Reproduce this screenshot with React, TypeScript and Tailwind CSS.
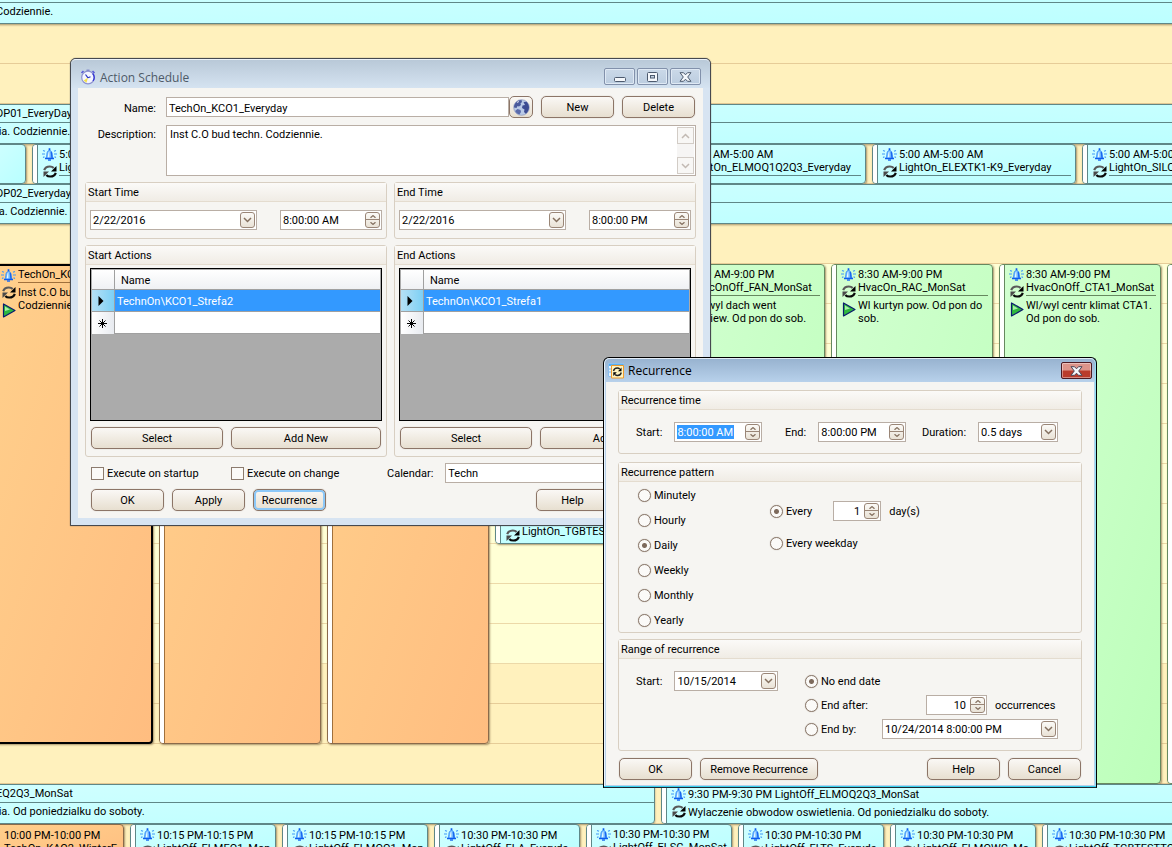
import React, { useId } from "react";
import type { ReactNode } from "react";

/* ---------- Icons ---------- */

function BellIcon() {
  return (
    <svg width="15" height="13" viewBox="0 0 15 13" fill="none" aria-hidden="true">
      <path d="M3.500 10.500C5 9.500 4.600 7 5 5c.4-1.700 1.300-2.600 2.500-2.600S9.600 3.300 10 5c.4 2 0 4.500 1.500 5.500z" fill="#6fb9ff" stroke="#2f86f6" strokeWidth=".8" />
      <path d="M5.700 9.500C6.200 8 5.900 4 7.400 3.200V9.500z" fill="#e6f8ff" />
      <path d="M9.200 4c.8 2 .2 4.500 1 6" stroke="#1a66f0" strokeWidth="1.300" />
      <path d="M3 10.500h9" stroke="#0d5cf0" strokeWidth="1.600" />
      <path d="M7.500 .300v2" stroke="#0d5cf0" strokeWidth="1.700" />
      <path d="M6 12h3" stroke="#1f6cf0" strokeWidth="1.400" />
      <path d="M1 2.500l2 .8M0 6h3M1 9.500l1.500-.8M14 2.500l-2 .8M15 6h-3M14 9.500l-1.500-.8" stroke="#3f97f8" strokeWidth="1.200" />
    </svg>
  );
}

function SyncIcon() {
  return (
    <svg width="14" height="13" viewBox="0 0 14 13" fill="none" aria-hidden="true">
      <path d="M1.200 5.200C2 2.800 4.200 1.500 6.800 1.500c1.600 0 3 .6 3.900 1.600" stroke="#5a5a5a" strokeWidth="2.200" />
      <path d="M13.500 1v5.500H8z" fill="#000" />
      <path d="M12.800 7.800c-.8 2.400-3 3.700-5.600 3.700-1.600 0-3-.6-3.900-1.600" stroke="#0a0a0a" strokeWidth="2.200" />
      <path d="M.5 12V6.500H6z" fill="#4a4a4a" />
    </svg>
  );
}

function PlayIcon() {
  return (
    <svg width="14" height="15" viewBox="0 0 14 15" aria-hidden="true">
      <path d="M1.500 1v13l11.500-6.500z" fill="#2fb83f" stroke="#0b1a6e" strokeWidth="1.200" strokeLinejoin="round" />
      <path d="M3 3.500v4.500l5-1.500z" fill="#a6f0a6" />
    </svg>
  );
}

function StopwatchIcon() {
  return (
    <svg width="16" height="16" viewBox="0 0 16 16" fill="none" aria-hidden="true">
      <path d="M1.500 4l2-2M12.500 2l2 2" stroke="#5a5ad8" strokeWidth="1.600" />
      <path d="M6.500 1.300h3" stroke="#7a80c8" strokeWidth="1.400" />
      <circle cx="8" cy="8.500" r="6.300" fill="#f4f5ff" stroke="#8e93d0" strokeWidth="1.200" />
      <path d="M8 8.500l-1.500 5.200-2.800-2.200z" fill="#f4e04a" />
      <path d="M8 8.800L5.500 5.500M8 8.800l2.500-1" stroke="#2b35c0" strokeWidth="1.200" />
      <path d="M12.700 4.500a6.300 6.300 0 0 1 .3 7.500" stroke="#3434d4" strokeWidth="1.300" />
    </svg>
  );
}

function GlobeIcon() {
  return (
    <svg width="17" height="17" viewBox="0 0 17 17" aria-hidden="true">
      <circle cx="8.500" cy="8.500" r="7.800" fill="#b9c9e6" stroke="#8794bd" strokeWidth=".7" />
      <path d="M3 3.500C4.500 1.800 6.500 1 8.500 1L9 3 7.500 4.500 8 6 6 7.500 4.500 7 3.500 9 1 8.500C1 6.500 1.700 4.800 3 3.500z" fill="#4a5a9c" />
      <path d="M10.500 3l3-.2C15 4.200 16 6.200 16 8.500c0 2.600-1.300 4.800-3.200 6.200L11 13l.5-2.500L9 9l.5-2.500L12 6z" fill="#3c4b92" />
      <path d="M4.500 10l3 1 .5 2-1.500 2.600C4.300 15 3 13.500 2 12z" fill="#5a6bab" />
      <path d="M4 3.500l2-1" stroke="#fff" strokeWidth=".8" />
    </svg>
  );
}

function RecurrenceIcon() {
  return (
    <svg width="17" height="16" viewBox="0 0 17 16" fill="none" aria-hidden="true">
      <path d="M.5.500h15v13H.5z" fill="#e6f3ff" stroke="#8cc0f0" />
      <path d="M1 1h14.500v2H1z" fill="#58aef0" />
      <path d="M1 6h2M1 9h2" stroke="#70b4ee" />
      <path d="M3.500 2.500h12v12.500h-12z" fill="#fff4c0" stroke="#f09a2a" />
      <path d="M5.500 8c.5-2 2-3 3.700-3 1.100 0 2 .4 2.600 1M13.300 9.500c-.5 2-2 3-3.700 3-1.100 0-2-.4-2.600-1" stroke="#222" strokeWidth="1.400" />
      <path d="M13.500 4.500v3.700H10zM5.300 13V9.300h3.500z" fill="#000" />
    </svg>
  );
}

function Chevron({ up = false, muted = false }: { up?: boolean; muted?: boolean }) {
  return (
    <svg width="9" height="6" viewBox="0 0 9 6" fill="none" aria-hidden="true">
      <path d={up ? "M1 5l3.500-3.500L8 5" : "M1 1l3.500 3.500L8 1"} stroke={muted ? "#c2bab3" : "#84705f"} strokeWidth="1.500" />
    </svg>
  );
}

function SmallArrow({ up = false }: { up?: boolean }) {
  return (
    <svg width="6" height="3" viewBox="0 0 6 3" fill="none" aria-hidden="true">
      <path d={up ? "M.5 2.800L3 .600l2.500 2.200" : "M.5.200L3 2.400 5.500.200"} stroke="#84705f" strokeWidth="1.200" />
    </svg>
  );
}

/* ---------- Calendar board ---------- */

type Tone = "cyan" | "green" | "orange";

const tones: Record<Tone, string> = {
  cyan: "border-[#5f8787] bg-linear-to-br from-[#d0ffff] to-[#b8ffff]",
  green: "border-[#66885f] bg-linear-to-br from-[#d2ffd0] to-[#bcffba]",
  orange: "border-[#8a6a4a] bg-linear-to-br from-[#ffd08c] to-[#ffbd80]",
};

const rules: Record<Tone, string> = {
  cyan: "border-[#5f8787]",
  green: "border-[#66885f]",
  orange: "border-[#a0703c]",
};

interface EventProps {
  tone: Tone;
  size: string;
  title?: string[];
  body?: string;
  play?: boolean;
  selected?: boolean;
  low?: boolean;
  plain?: boolean;
}

function EventCard({ tone, size, title = [], body, play, selected, low, plain }: EventProps) {
  return (
    <article
      className={`flex shrink-0 overflow-hidden rounded shadow-[1px_1px_2px_#a8946a] ${tones[tone]} ${size} ${
        selected ? "border-2 border-black" : "border"
      }`}
    >
      <div className={`w-[5px] shrink-0 border-r bg-white ${rules[tone]}`} />
      {title.length > 0 && (
        <>
          <div className="flex w-[21px] shrink-0 flex-col items-center gap-1 pt-[3px] pl-[2px]">
            <BellIcon />
            <SyncIcon />
            {play && <PlayIcon />}
          </div>
          <div className={`min-w-0 flex-1 overflow-hidden pr-1 ${low ? "pt-1" : selected ? "pt-[2px]" : "pt-[3px]"}`}>
            {title.map((line) => (
              <p key={line} className="whitespace-nowrap">
                {line}
              </p>
            ))}
            {!plain && <hr className={`mt-px mb-[3px] ${rules[tone]}`} />}
            {body && <p className="whitespace-pre-line">{body}</p>}
          </div>
        </>
      )}
    </article>
  );
}

function Band({ title, body, size = "" }: { title: string; body: string; size?: string }) {
  return (
    <article
      className={`h-10 shrink-0 border border-[#5f8787] bg-linear-to-br from-[#d0ffff] to-[#bcffff] pt-[2px] pl-[5px] whitespace-nowrap shadow-[0_1px_2px_#a8946a] ${size}`}
    >
      <p className="h-[13px]">{title}</p>
      <hr className="mt-[2px] mb-[2px] border-[#5f8787]" />
      <p>{body}</p>
    </article>
  );
}

const slots = Array.from({ length: 22 }, (_, i) => i);

const lateEvents = [
  { line: "10:15 PM-10:15 PM", name: "LightOff_ELMEQ1_Mon" },
  { line: "10:15 PM-10:15 PM", name: "LightOff_ELMOQ1_Mon" },
  { line: "10:30 PM-10:30 PM", name: "LightOff_ELA_Everyda" },
  { line: "10:30 PM-10:30 PM", name: "LightOff_ELSG_MonSat", high: true },
  { line: "10:30 PM-10:30 PM", name: "LightOff_ELTS_Everyda" },
  { line: "10:30 PM-10:30 PM", name: "LightOff_ELMOWG_Mo" },
  { line: "10:30 PM-10:30 PM", name: "LightOff_TGBTESTTO" },
];

function Board() {
  return (
    <main className="relative -mt-4 -mr-1 -ml-[10px]">
      <div className="absolute inset-0">
        {slots.map((i) => (
          <div
            key={i}
            className={`h-10 border-b ${i >= 7 && i < 17 ? "border-[#ecd9a8] bg-[#ffffd5]" : "border-[#e6cc98] bg-[#fff1bd]"}`}
          />
        ))}
      </div>
      <div className="relative">
        <Band title="" body="Codziennie." />
        <div className="mt-20">
          <Band title="DP01_EveryDay" body="lia. Codziennie." />
        </div>
        <div className="flex h-10 gap-[6px] overflow-hidden">
          <EventCard tone="cyan" size="w-[36px]" />
          <EventCard tone="cyan" size="w-[204px]" title={["5:00 AM-5:00 AM", "LightOn_Everyday"]} />
          <EventCard tone="cyan" size="w-[204px]" />
          <EventCard tone="cyan" size="w-[204px]" />
          <EventCard tone="cyan" size="w-[204px]" title={["5:00 AM-5:00 AM", "LightOn_ELMOQ1Q2Q3_Everyday"]} />
          <EventCard tone="cyan" size="w-[204px]" title={["5:00 AM-5:00 AM", "LightOn_ELEXTK1-K9_Everyday"]} />
          <EventCard tone="cyan" size="w-[204px]" title={["5:00 AM-5:00 AM", "LightOn_SILOS_Everyday"]} />
        </div>
        <Band title="DP02_Everyday" body="ia. Codziennie." />
        <div className="mt-10 flex h-[520px] gap-[6px] overflow-hidden">
          <EventCard
            tone="orange"
            size="h-[480px] w-[163px]"
            title={["TechOn_KCO1_Everyday"]}
            body={"Inst C.O bud techn.\nCodziennie."}
            play
            selected
          />
          <EventCard tone="orange" size="h-[480px] w-[162px]" />
          <EventCard tone="orange" size="h-[480px] w-[162px]" />
          <div className="pt-[244px]">
            <EventCard tone="cyan" size="h-9 w-[162px]" title={["5:30 PM", "LightOn_TGBTEST"]} plain />
          </div>
          <EventCard
            tone="green"
            size="w-[162px]"
            title={["8:30 AM-9:00 PM", "HvacOnOff_FAN_MonSat"]}
            body={"Wl/wyl dach went\nnawiew. Od pon do sob."}
            play
          />
          <EventCard tone="green" size="w-[162px]" title={["8:30 AM-9:00 PM", "HvacOn_RAC_MonSat"]} body="Wl kurtyn pow. Od pon do sob." play />
          <EventCard tone="green" size="w-[162px]" title={["8:30 AM-9:00 PM", "HvacOnOff_CTA1_MonSat"]} body="Wl/wyl centr klimat CTA1. Od pon do sob." play />
          <EventCard tone="green" size="w-[162px]" />
        </div>
        <div className="flex h-10 gap-[6px]">
          <Band size="w-[665px] rounded-br" title="EQ2Q3_MonSat" body="lia. Od poniedzialku do soboty." />
          <EventCard
            tone="cyan"
            size="w-[700px]"
            title={["9:30 PM-9:30 PM LightOff_ELMOQ2Q3_MonSat"]}
            body="Wylaczenie obwodow oswietlenia. Od poniedzialku do soboty."
          />
        </div>
        <div className="flex h-10 gap-[6px] overflow-hidden">
          <article className={`w-[134px] shrink-0 overflow-hidden rounded border pt-1 pl-[13px] whitespace-nowrap shadow-[1px_1px_2px_#a8946a] ${tones.orange}`}>
            <p>10:00 PM-10:00 PM</p>
            <p>TechOn_KAQ2_WinterE</p>
          </article>
          {lateEvents.map((e) => (
            <EventCard key={e.name} tone="cyan" size="w-[146px]" title={[e.line, e.name]} low={!e.high} plain />
          ))}
        </div>
      </div>
    </main>
  );
}

/* ---------- Form controls ---------- */

const frame = "flex h-5 items-center border border-[#b9aea5] bg-white";
const boxButton =
  "flex items-center justify-center rounded-[3px] border border-[#9a8677] bg-linear-to-b from-[#fbfaf7] to-[#e9e2d6]";

function PushButton({ children, size = "w-[73px]", focused }: { children: ReactNode; size?: string; focused?: boolean }) {
  return (
    <button
      type="button"
      className={`h-[22px] shrink-0 rounded-[5px] border border-[#8c7567] bg-linear-to-b from-[#faf8f5] to-[#e7dfd0] text-center shadow-[0_0_1px_#b9aa9c] ${size} ${
        focused ? "inset-ring-2 inset-ring-[#8cc8f8]" : ""
      }`}
    >
      {children}
    </button>
  );
}

function Spinner() {
  return (
    <span className="mr-px flex h-4 w-[15px] shrink-0 flex-col overflow-hidden rounded-[3px] border border-[#9a8677] bg-linear-to-b from-[#fbfaf7] to-[#e9e2d6]">
      <button type="button" aria-label="Increase" className="flex h-[7px] items-center justify-center border-b border-[#9a8677]">
        <SmallArrow up />
      </button>
      <button type="button" aria-label="Decrease" className="flex h-[7px] items-center justify-center">
        <SmallArrow />
      </button>
    </span>
  );
}

interface FieldProps {
  label: string;
  value: string;
  size: string;
  hideLabel?: boolean;
  kind?: "spin" | "drop";
  selected?: boolean;
  right?: boolean;
}

function Field({ label, value, size, hideLabel, kind = "spin", selected, right }: FieldProps) {
  const id = useId();
  return (
    <>
      {!hideLabel && <label htmlFor={id}>{label}</label>}
      <span className={`${frame} ${size}`}>
        <input
          id={id}
          aria-label={hideLabel ? label : undefined}
          defaultValue={value}
          className={`h-[14px] outline-none ${
            selected ? "mr-auto ml-[2px] w-[57px] bg-[#3399ff] text-white" : "min-w-0 flex-1 pl-[2px]"
          } ${right ? "pr-1 text-right" : ""}`}
        />
        {kind === "spin" ? (
          <Spinner />
        ) : (
          <button type="button" aria-label="Open calendar" className={`mr-px h-4 w-[15px] shrink-0 ${boxButton}`}>
            <Chevron />
          </button>
        )}
      </span>
    </>
  );
}

function Dropdown({ label, value, size }: { label: string; value: string; size: string }) {
  const id = useId();
  return (
    <>
      <label htmlFor={id}>{label}</label>
      <span className={`relative ${frame} ${size}`}>
        <select id={id} defaultValue={value} className="h-full w-full appearance-none pl-[2px] outline-none">
          <option>{value}</option>
        </select>
        <span className={`pointer-events-none absolute top-px right-px h-4 w-[15px] ${boxButton}`}>
          <Chevron />
        </span>
      </span>
    </>
  );
}

function Radio({ name, label, checked }: { name: string; label: string; checked?: boolean }) {
  return (
    <label className="flex items-center gap-[3px] whitespace-nowrap">
      <input
        type="radio"
        name={name}
        defaultChecked={checked}
        className="size-[13px] appearance-none rounded-full border border-[#8c7b6e] bg-[#fbfaf8] shadow-[0_0_1px_#a99a8d] checked:bg-[radial-gradient(circle,#7d6a5c_2px,transparent_3px)]"
      />
      {label}
    </label>
  );
}

function Check({ label, size }: { label: string; size: string }) {
  return (
    <label className={`flex items-center gap-[3px] whitespace-nowrap ${size}`}>
      <input type="checkbox" className="size-[13px] appearance-none border border-[#8c7b6e] bg-[#fbfaf8]" />
      {label}
    </label>
  );
}

function Group({ title, children, pad }: { title: string; children: ReactNode; pad: string }) {
  return (
    <section className="min-w-0 flex-1 rounded-[3px] border border-[#d8cfc2]">
      <h2 className="h-[19px] border-b border-[#e4dccf] bg-linear-to-b from-[#fbfaf8] to-[#f0ece5] pl-[2px] leading-[20px]">{title}</h2>
      <div className={pad}>{children}</div>
    </section>
  );
}

function ActionsTable({ item }: { item: string }) {
  return (
    <div className="h-[153px] border border-black bg-[#ababab] p-px">
      <table className="w-full border-separate border-spacing-0 text-left">
        <thead>
          <tr className="h-5 bg-linear-to-b from-white to-[#eef0f3]">
            <th className="w-[23px] border-r border-b border-[#a0a0a0]" />
            <th className="border-b border-[#a0a0a0] pt-px pl-[6px] font-normal">Name</th>
          </tr>
        </thead>
        <tbody>
          <tr className="h-[22px]">
            <td className="border-r border-b border-[#a0a0a0] bg-linear-to-r from-[#b5e0f5] to-[#7cd0f5] pl-[6px]">
              <svg width="6" height="10" viewBox="0 0 6 10" aria-hidden="true">
                <path d="M.5 0v10L5.500 5z" />
              </svg>
            </td>
            <td className="border-b border-[#a0a0a0] bg-[#3399ff] pt-px pl-[2px] text-white">{item}</td>
          </tr>
          <tr className="h-[22px]">
            <td className="border-r border-[#a0a0a0] bg-linear-to-r from-white to-[#e8ebf0] pl-[6px]">
              <svg width="9" height="9" viewBox="0 0 9 9" stroke="#000" aria-hidden="true">
                <path d="M4.500 0v9M0 4.500h9M1.500 1.500l6 6M7.500 1.500l-6 6" />
              </svg>
            </td>
            <td className="border-b border-[#a0a0a0] bg-white" />
          </tr>
        </tbody>
      </table>
    </div>
  );
}

/* ---------- Windows ---------- */

const caption =
  "flex h-[17px] w-[31px] items-center justify-center rounded-[2px] border border-[#8291ab] bg-linear-to-b from-[#cbd9e8] to-[#bccde0] inset-ring inset-ring-[#dfe9f4]";

function CaptionCross({ dark }: { dark?: boolean }) {
  return (
    <svg width="13" height="10" viewBox="0 0 13 10" aria-hidden="true">
      <path
        d="M1 .700h3.500L6.500 2.800 8.500.700H12L8.700 5l3.300 4.300H8.500L6.500 7.200l-2 2.100H1L4.300 5z"
        fill="#f4f7fb"
        stroke={dark ? "#4b4658" : "#4d5a6e"}
        strokeLinejoin="round"
      />
    </svg>
  );
}

function ActionScheduleWindow() {
  return (
    <section className="absolute top-[58px] left-[70px] w-[641px] rounded-t-md border border-[#46494f] bg-[#d7e4f2] px-[7px] pb-[7px] shadow-[0_0_1px_#333]">
      <header className="-mx-[7px] flex h-[29px] items-center rounded-t-[5px] border-t border-white/60 bg-linear-to-b from-[#b9c9d8] to-[#d5e3f1] pt-[7px] pr-[9px] pb-[2px] pl-[9px]">
        <StopwatchIcon />
        <h1 className="flex-1 pt-px pl-1 font-['Open_Sans',sans-serif] text-[12px] text-[#4e5a68]">Action Schedule</h1>
        <div className="flex gap-[2px]">
          <button type="button" aria-label="Minimize" className={caption}>
            <svg width="12" height="10" viewBox="0 0 12 10" aria-hidden="true">
              <rect x=".5" y="5.500" width="11" height="4" rx="1" fill="#f4f7fb" stroke="#4d5a6e" />
            </svg>
          </button>
          <button type="button" aria-label="Maximize" className={caption}>
            <svg width="11" height="10" viewBox="0 0 11 10" aria-hidden="true">
              <rect x=".5" y=".5" width="10" height="9" rx="1" fill="#f4f7fb" stroke="#4d5a6e" />
              <rect x="3.500" y="3.500" width="4" height="2.500" fill="#c5d3e3" stroke="#4d5a6e" />
            </svg>
          </button>
          <button type="button" aria-label="Close" className={caption}>
            <CaptionCross />
          </button>
        </div>
      </header>
      <form className="bg-[#f6f5f2] px-[7px] pt-2 pb-[7px]">
        <div className="flex items-center">
          <label htmlFor="schedule-name" className="w-[71px] pt-[2px] text-right">
            Name:
          </label>
          <input id="schedule-name" defaultValue="TechOn_KCO1_Everyday" className="ml-[10px] h-5 min-w-0 flex-1 border border-[#b9aea5] bg-white pt-[2px] pl-[2px] outline-none" />
          <button type="button" aria-label="Translate" className="flex h-[22px] w-6 items-center justify-center rounded-[5px] border border-[#8c7567] bg-linear-to-b from-[#faf8f5] to-[#e7dfd0]">
            <GlobeIcon />
          </button>
          <div className="ml-2 flex gap-2 pr-px">
            <PushButton>New</PushButton>
            <PushButton>Delete</PushButton>
          </div>
        </div>
        <div className="mt-[7px] flex">
          <label htmlFor="schedule-description" className="w-[71px] pt-[3px] text-right">
            Description:
          </label>
          <div className="ml-[10px] flex h-[51px] flex-1 border border-[#b9aea5] bg-white">
            <textarea id="schedule-description" defaultValue="Inst C.O bud techn. Codziennie." className="flex-1 resize-none pt-[2px] pl-[3px] outline-none" />
            <div className="m-px flex w-[17px] flex-col justify-between bg-[#f6f5f4]">
              <button type="button" aria-label="Scroll up" className="flex h-[17px] items-center justify-center border border-[#d2ccc6] bg-[#f8f7f5]">
                <Chevron up muted />
              </button>
              <button type="button" aria-label="Scroll down" className="flex h-[17px] items-center justify-center border border-[#d2ccc6] bg-[#f8f7f5]">
                <Chevron muted />
              </button>
            </div>
          </div>
        </div>
        <div className="mt-[6px] flex gap-[7px]">
          <Group title="Start Time" pad="flex justify-between px-1 pt-2 pb-2">
            <Field label="Start date" hideLabel value="2/22/2016" kind="drop" size="w-[167px]" />
            <Field label="Start hour" hideLabel value="8:00:00 AM" size="w-[102px]" />
          </Group>
          <Group title="End Time" pad="flex justify-between px-1 pt-2 pb-2">
            <Field label="End date" hideLabel value="2/22/2016" kind="drop" size="w-[167px]" />
            <Field label="End hour" hideLabel value="8:00:00 PM" size="w-[102px]" />
          </Group>
        </div>
        <div className="mt-[6px] flex gap-[7px]">
          {["TechnOn\\KCO1_Strefa2", "TechnOn\\KCO1_Strefa1"].map((item, i) => (
            <Group key={item} title={i ? "End Actions" : "Start Actions"} pad="px-1 pt-[3px] pb-[7px]">
              <ActionsTable item={item} />
              <div className="mt-[6px] flex gap-2 px-px">
                <PushButton size="w-[132px]">Select</PushButton>
                <PushButton size="flex-1">Add New</PushButton>
              </div>
            </Group>
          ))}
        </div>
        <div className="mt-[6px] flex items-center pl-[6px]">
          <Check label="Execute on startup" size="w-[140px]" />
          <Check label="Execute on change" size="w-[156px]" />
          <div className="flex flex-1 items-center gap-3">
            <Dropdown label="Calendar:" value="Techn" size="flex-1" />
          </div>
        </div>
        <div className="mt-[6px] flex gap-2 pl-[6px]">
          <PushButton>OK</PushButton>
          <PushButton>Apply</PushButton>
          <PushButton focused>Recurrence</PushButton>
          <div className="flex flex-1 justify-end pr-[87px]">
            <PushButton>Help</PushButton>
          </div>
        </div>
      </form>
    </section>
  );
}

function RecurrenceWindow() {
  return (
    <section className="absolute top-[357px] left-[603px] w-[494px] rounded-t-md border border-black border-b-[#1b2a33] bg-[#b7d0ea] px-[2px] pb-[2px] shadow-[inset_0_-1px_0_#35d0ee,inset_1px_0_0_#eaf4fc,inset_-1px_0_0_#8fe0f4]">
      <header className="-mx-px flex h-6 items-center rounded-t-[5px] border-t border-white/60 bg-linear-to-b from-[#98b3d0] to-[#b8d1eb] pr-[3px] pl-[3px]">
        <RecurrenceIcon />
        <h1 className="flex-1 pl-[3px] font-['Open_Sans',sans-serif] text-[12px] text-black">Recurrence</h1>
        <button
          type="button"
          aria-label="Close"
          className="flex h-[17px] w-[31px] items-center justify-center rounded-[2px] border border-[#4c1a22] bg-linear-to-b from-[#dc948a] from-45% to-[#b93b2c] to-55% inset-ring inset-ring-white/40"
        >
          <CaptionCross dark />
        </button>
      </header>
      <form className="flex flex-col bg-[#f6f5f2] px-3 pt-2 pb-[5px]">
        <Group title="Recurrence time" pad="flex items-center pt-3 pb-[11px] pl-[17px]">
          <div className="flex w-[149px] items-center gap-3">
            <Field label="Start:" value="8:00:00 AM" size="w-[88px]" selected />
          </div>
          <div className="flex w-[137px] items-center gap-3">
            <Field label="End:" value="8:00:00 PM" size="w-[88px]" />
          </div>
          <div className="flex items-center gap-3">
            <Dropdown label="Duration:" value="0.5 days" size="w-[80px]" />
          </div>
        </Group>
        <div className="mt-2 flex">
          <Group title="Recurrence pattern" pad="flex pt-[7px] pb-[5px] pl-[19px]">
            <div className="flex w-[132px] flex-col gap-3">
              {["Minutely", "Hourly", "Daily", "Weekly", "Monthly", "Yearly"].map((p) => (
                <Radio key={p} name="pattern" label={p} checked={p === "Daily"} />
              ))}
            </div>
            <div className="flex flex-col gap-4 pt-3">
              <div className="flex items-center">
                <Radio name="daily" label="Every" checked />
                <div className="ml-[21px] flex items-center gap-2">
                  <Field label="Day interval" hideLabel value="1" size="w-[48px]" right />
                  <span>day(s)</span>
                </div>
              </div>
              <Radio name="daily" label="Every weekday" />
            </div>
          </Group>
        </div>
        <div className="mt-[6px] flex">
          <Group title="Range of recurrence" pad="flex pt-3 pb-[11px] pl-[17px]">
            <div className="flex w-[169px] items-center gap-3 self-start">
              <Field label="Start:" value="10/15/2014" kind="drop" size="w-[104px]" />
            </div>
            <div className="flex flex-col gap-1">
              <div className="flex h-5 items-center">
                <Radio name="range" label="No end date" checked />
              </div>
              <div className="flex h-5 items-center">
                <div className="w-[121px]">
                  <Radio name="range" label="End after:" />
                </div>
                <div className="flex items-center gap-2">
                  <Field label="Occurrence count" hideLabel value="10" size="w-[61px]" right />
                  <span>occurrences</span>
                </div>
              </div>
              <div className="flex h-5 items-center">
                <div className="w-[77px]">
                  <Radio name="range" label="End by:" />
                </div>
                <Field label="End by date" hideLabel value="10/24/2014 8:00:00 PM" kind="drop" size="w-[176px]" />
              </div>
            </div>
          </Group>
        </div>
        <div className="mt-[7px] flex gap-2 px-px">
          <PushButton>OK</PushButton>
          <PushButton size="w-[118px]">Remove Recurrence</PushButton>
          <div className="flex flex-1 justify-end gap-2">
            <PushButton>Help</PushButton>
            <PushButton>Cancel</PushButton>
          </div>
        </div>
      </form>
    </section>
  );
}

export default function App() {
  return (
    <div className="relative h-screen overflow-hidden bg-[#fff1bd] font-[Roboto,sans-serif] text-[11px] leading-[13px] text-black">
      <Board />
      <ActionScheduleWindow />
      <RecurrenceWindow />
    </div>
  );
}
